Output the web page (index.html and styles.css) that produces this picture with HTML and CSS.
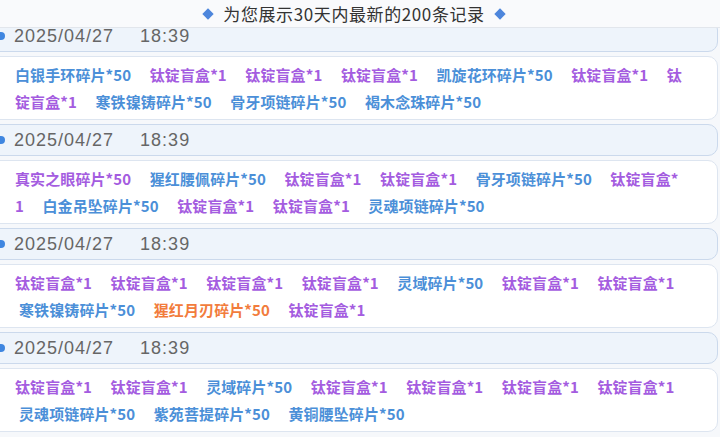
FILE: index.html
```html
<!DOCTYPE html>
<html lang="zh-CN">
<head>
    <meta charset="UTF-8">
    <meta name="viewport" content="width=device-width, initial-scale=1.0">
    <title>兑换记录</title>
    <link rel="stylesheet" href="styles.css">
</head>
<body>
    <div class="tip">
        <span class="diamond"></span>
        <span>为您展示30天内最新的200条记录</span>
        <span class="diamond"></span>
    </div>

    <div class="list">
        <div class="record">
            <div class="date"><span class="dot"></span>2025/04/27<span class="time">18:39</span></div>
            <div class="items">
                <span class="blue">白银手环碎片*50</span>
                <span class="purple">钛锭盲盒*1</span>
                <span class="purple">钛锭盲盒*1</span>
                <span class="purple">钛锭盲盒*1</span>
                <span class="blue">凯旋花环碎片*50</span>
                <span class="purple">钛锭盲盒*1</span>
                <span class="purple">钛锭盲盒*1</span>
                <span class="blue">寒铁镍铸碎片*50</span>
                <span class="blue">骨牙项链碎片*50</span>
                <span class="blue">褐木念珠碎片*50</span>
            </div>
        </div>

        <div class="record">
            <div class="date"><span class="dot"></span>2025/04/27<span class="time">18:39</span></div>
            <div class="items">
                <span class="purple">真实之眼碎片*50</span>
                <span class="blue">猩红腰佩碎片*50</span>
                <span class="purple">钛锭盲盒*1</span>
                <span class="purple">钛锭盲盒*1</span>
                <span class="blue">骨牙项链碎片*50</span>
                <span class="purple">钛锭盲盒*1</span>
                <span class="blue">白金吊坠碎片*50</span>
                <span class="purple">钛锭盲盒*1</span>
                <span class="purple">钛锭盲盒*1</span>
                <span class="blue">灵魂项链碎片*50</span>
            </div>
        </div>

        <div class="record">
            <div class="date"><span class="dot"></span>2025/04/27<span class="time">18:39</span></div>
            <div class="items">
                <span class="purple">钛锭盲盒*1</span>
                <span class="purple">钛锭盲盒*1</span>
                <span class="purple">钛锭盲盒*1</span>
                <span class="purple">钛锭盲盒*1</span>
                <span class="blue">灵域碎片*50</span>
                <span class="purple">钛锭盲盒*1</span>
                <span class="purple">钛锭盲盒*1</span>
                <span class="blue">寒铁镍铸碎片*50</span>
                <span class="orange">猩红月刃碎片*50</span>
                <span class="purple">钛锭盲盒*1</span>
            </div>
        </div>

        <div class="record">
            <div class="date"><span class="dot"></span>2025/04/27<span class="time">18:39</span></div>
            <div class="items">
                <span class="purple">钛锭盲盒*1</span>
                <span class="purple">钛锭盲盒*1</span>
                <span class="blue">灵域碎片*50</span>
                <span class="purple">钛锭盲盒*1</span>
                <span class="purple">钛锭盲盒*1</span>
                <span class="purple">钛锭盲盒*1</span>
                <span class="purple">钛锭盲盒*1</span>
                <span class="blue">灵魂项链碎片*50</span>
                <span class="blue">紫苑菩提碎片*50</span>
                <span class="blue">黄铜腰坠碎片*50</span>
            </div>
        </div>
    </div>
</body>
</html>
```

FILE: styles.css
```css
body {
    margin: 0;
    background-color: #f6f8fb;
    font-family: "Noto Sans CJK SC", "Noto Sans", sans-serif;
    overflow: hidden;
}
.tip {
    position: relative;
    z-index: 1;
    height: 27px;
    display: flex;
    align-items: center;
    justify-content: center;
    gap: 11px;
    padding-right: 12px;
    background-color: #f9fafc;
    border-bottom: 1px solid #e2e6ec;
    color: #333;
    font-size: 17px;
    letter-spacing: 0.6px;
}
.diamond {
    width: 8px;
    height: 8px;
    background-color: #4d86dc;
    transform: rotate(45deg);
}
.list {
    margin: -8px 2px 0 -12px;
    display: flex;
    flex-direction: column;
    gap: 4px;
}
.record {
    display: flex;
    flex-direction: column;
    gap: 4px;
}
.date {
    height: 30px;
    display: flex;
    align-items: center;
    padding-left: 8px;
    background-color: #eef4fb;
    border: 1px solid #cbd9ec;
    border-radius: 10px;
    color: #666;
    font-family: "Liberation Sans", sans-serif;
    font-size: 18px;
    letter-spacing: 1px;
}
.dot {
    width: 8px;
    height: 8px;
    margin-right: 9px;
    border-radius: 50%;
    background-color: #3f86e0;
}
.time {
    margin-left: 26px;
}
.items {
    padding: 4px 31px 4px 26px;
    background-color: #fff;
    border: 1px solid #dde5f0;
    border-radius: 10px;
    font-size: 15px;
    font-weight: 700;
    line-height: 27px;
    letter-spacing: 0.1px;
    word-break: break-all;
}
.items span {
    margin: 0 11px 0 4px;
}
.items span:first-child {
    margin-left: 0;
}
.purple {
    color: #a45ce0;
}
.blue {
    color: #4b8fd8;
}
.orange {
    color: #f27c3c;
}
```
